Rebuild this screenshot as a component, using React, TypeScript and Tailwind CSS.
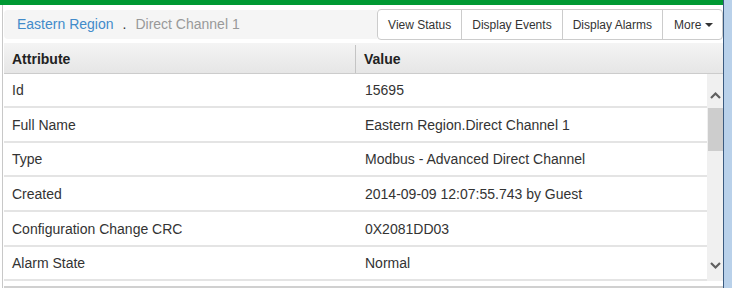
const rows: [string, string, string][] = [
  ["Id", "15695", "h-[34px]"],
  ["Full Name", "Eastern Region.Direct Channel 1", "h-[35px]"],
  ["Type", "Modbus - Advanced Direct Channel", "h-[34px]"],
  ["Created", "2014-09-09 12:07:55.743 by Guest", "h-[35px]"],
  ["Configuration Change CRC", "0X2081DD03", "h-[35px]"],
  ["Alarm State", "Normal", "h-[34px]"],
];

const buttons = ["View Status", "Display Events", "Display Alarms"];

export default function App() {
  return (
    <div className="flex h-[288px] w-[732px] overflow-hidden bg-white font-['Liberation_Sans',Arial,sans-serif] text-[#333]">
      <div className="flex w-[723px] flex-col">
        <div className="h-[5px] bg-[#009933]" />
        <div className="ml-[2px] flex flex-1 flex-col border-l border-[#c8c8c8] pl-px">
          {/* breadcrumb + actions */}
          <div className="mt-[4px] flex h-[31px] items-stretch">
            <div className="my-px flex flex-1 items-center rounded-l bg-[#f5f5f5] pl-[13px] text-[14px]">
              <span className="text-[#428bca]">Eastern Region</span>
              <span className="px-[9px] text-[#333]">.</span>
              <span className="text-[#999]">Direct Channel 1</span>
            </div>
            <div className="flex rounded border border-[#ccc] bg-white text-[12px]">
              {buttons.map((b) => (
                <div key={b} className="flex items-center border-r border-[#ccc] px-[10px]">
                  {b}
                </div>
              ))}
              <div className="flex w-[59px] items-center pl-[11px]">
                More
                <svg className="ml-[4px]" width="8" height="4" viewBox="0 0 8 4">
                  <path d="M0 0h8L4 4z" fill="#333" />
                </svg>
              </div>
            </div>
          </div>

          {/* table header */}
          <div className="mt-[3px] flex h-[31px] border-b border-[#ccc] bg-gradient-to-b from-[#f4f4f4] to-[#e6e6e6] pt-[2px] text-[14px] font-bold text-[#222]">
            <div className="flex w-[352px] items-center border-r border-[#c4c4c4] pl-[8px]">Attribute</div>
            <div className="flex items-center pl-[8px]">Value</div>
          </div>

          {/* body */}
          <div className="flex h-[207px]">
            <div className="flex-1">
              {rows.map(([k, v, h]) => (
                <div key={k} className={`flex ${h} border-b-2 border-[#e4e4e4] pt-px text-[14px]`}>
                  <div className="flex w-[353px] items-center pl-[8px]">{k}</div>
                  <div className="flex items-center pl-[8px]">{v}</div>
                </div>
              ))}
            </div>
            <div className="flex w-[16px] flex-col items-center bg-[#f0f0f0]">
              <svg className="mt-[17px]" width="11" height="8" viewBox="0 0 11 8">
                <path d="M1 7L5.5 2.5L10 7" stroke="#606060" strokeWidth="2.2" fill="none" />
              </svg>
              <div className="mt-[9px] h-[43px] w-[15px] bg-[#cdcdcd]" />
              <div className="flex-1" />
              <svg className="mb-[11px]" width="11" height="8" viewBox="0 0 11 8">
                <path d="M1 1L5.5 5.5L10 1" stroke="#606060" strokeWidth="2.2" fill="none" />
              </svg>
            </div>
          </div>
          <div className="mt-[5px] border-b-2 border-[#d0d0d0]" />
        </div>
      </div>
      <div className="w-[9px] border-l border-[#3a5a80] bg-[#b9d1ea]" />
    </div>
  );
}
